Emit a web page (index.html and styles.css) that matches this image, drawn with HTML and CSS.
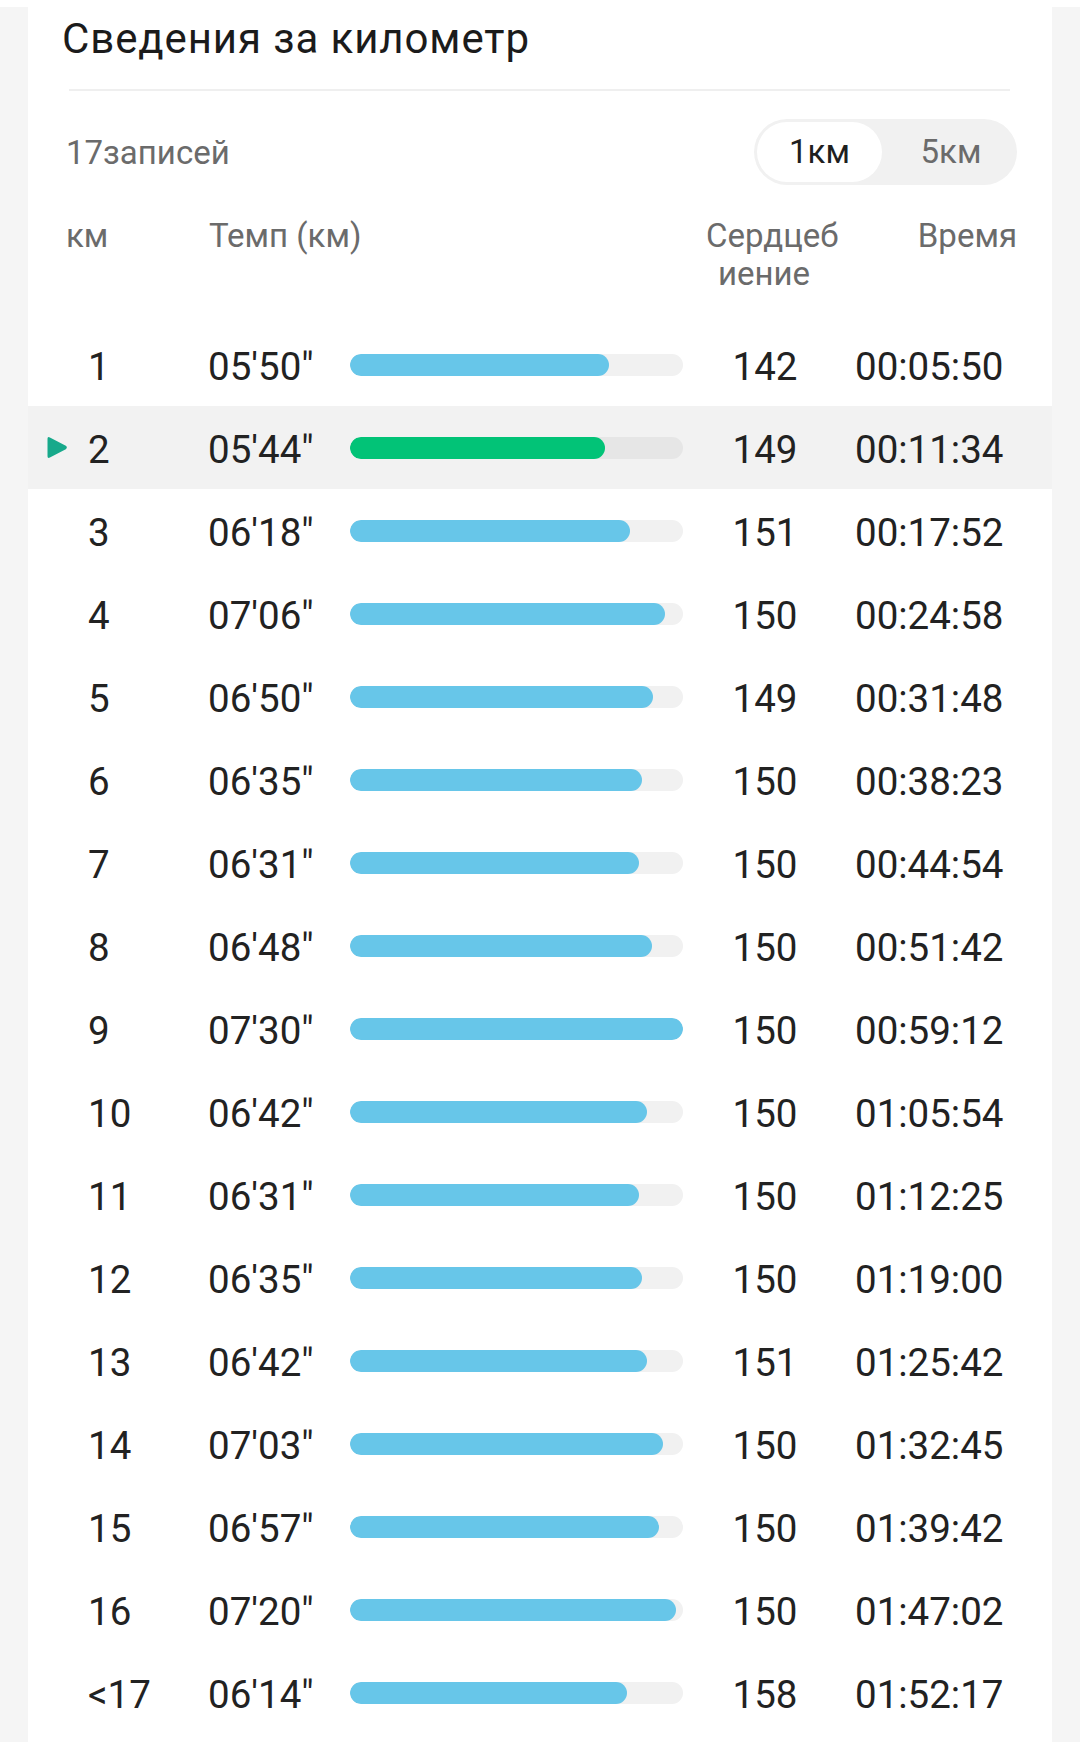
FILE: index.html
```html
<!DOCTYPE html>
<html lang="ru">
<head>
<meta charset="utf-8">
<title>Сведения за километр</title>
<link rel="stylesheet" href="styles.css">
</head>
<body>
<div class="top-strip"></div>
<section class="card">
  <h1 class="title">Сведения за километр</h1>
  <div class="divider"></div>
  <div class="summary">
    <span class="count">17записей</span>
    <div class="toggle">
      <span class="opt active">1км</span>
      <span class="opt">5км</span>
    </div>
  </div>
  <div class="head">
    <span class="h-km">км</span>
    <span class="h-pace">Темп (км)</span>
    <span class="h-hr">Сердцеб<br>иение</span>
    <span class="h-time">Время</span>
  </div>
  <div class="rows">
    <div class="row"><span class="mark"></span><span class="km">1</span><span class="pace">05'50"</span><span class="bar"><span class="fill" style="width:77.78%"></span></span><span class="hr">142</span><span class="time">00:05:50</span></div>
    <div class="row current"><span class="mark"><svg viewBox="0 0 22 24" width="22" height="25"><path d="M1.5 3.2 Q1.5 0.6 3.9 1.9 L19.8 10.3 Q21.9 12 19.8 13.7 L3.9 22.1 Q1.5 23.4 1.5 20.8 Z" fill="#17a98b"/></svg></span><span class="km">2</span><span class="pace">05'44"</span><span class="bar"><span class="fill" style="width:76.44%"></span></span><span class="hr">149</span><span class="time">00:11:34</span></div>
    <div class="row"><span class="mark"></span><span class="km">3</span><span class="pace">06'18"</span><span class="bar"><span class="fill" style="width:84%"></span></span><span class="hr">151</span><span class="time">00:17:52</span></div>
    <div class="row"><span class="mark"></span><span class="km">4</span><span class="pace">07'06"</span><span class="bar"><span class="fill" style="width:94.67%"></span></span><span class="hr">150</span><span class="time">00:24:58</span></div>
    <div class="row"><span class="mark"></span><span class="km">5</span><span class="pace">06'50"</span><span class="bar"><span class="fill" style="width:91.11%"></span></span><span class="hr">149</span><span class="time">00:31:48</span></div>
    <div class="row"><span class="mark"></span><span class="km">6</span><span class="pace">06'35"</span><span class="bar"><span class="fill" style="width:87.78%"></span></span><span class="hr">150</span><span class="time">00:38:23</span></div>
    <div class="row"><span class="mark"></span><span class="km">7</span><span class="pace">06'31"</span><span class="bar"><span class="fill" style="width:86.89%"></span></span><span class="hr">150</span><span class="time">00:44:54</span></div>
    <div class="row"><span class="mark"></span><span class="km">8</span><span class="pace">06'48"</span><span class="bar"><span class="fill" style="width:90.67%"></span></span><span class="hr">150</span><span class="time">00:51:42</span></div>
    <div class="row"><span class="mark"></span><span class="km">9</span><span class="pace">07'30"</span><span class="bar"><span class="fill" style="width:100%"></span></span><span class="hr">150</span><span class="time">00:59:12</span></div>
    <div class="row"><span class="mark"></span><span class="km">10</span><span class="pace">06'42"</span><span class="bar"><span class="fill" style="width:89.33%"></span></span><span class="hr">150</span><span class="time">01:05:54</span></div>
    <div class="row"><span class="mark"></span><span class="km">11</span><span class="pace">06'31"</span><span class="bar"><span class="fill" style="width:86.89%"></span></span><span class="hr">150</span><span class="time">01:12:25</span></div>
    <div class="row"><span class="mark"></span><span class="km">12</span><span class="pace">06'35"</span><span class="bar"><span class="fill" style="width:87.78%"></span></span><span class="hr">150</span><span class="time">01:19:00</span></div>
    <div class="row"><span class="mark"></span><span class="km">13</span><span class="pace">06'42"</span><span class="bar"><span class="fill" style="width:89.33%"></span></span><span class="hr">151</span><span class="time">01:25:42</span></div>
    <div class="row"><span class="mark"></span><span class="km">14</span><span class="pace">07'03"</span><span class="bar"><span class="fill" style="width:94%"></span></span><span class="hr">150</span><span class="time">01:32:45</span></div>
    <div class="row"><span class="mark"></span><span class="km">15</span><span class="pace">06'57"</span><span class="bar"><span class="fill" style="width:92.67%"></span></span><span class="hr">150</span><span class="time">01:39:42</span></div>
    <div class="row"><span class="mark"></span><span class="km">16</span><span class="pace">07'20"</span><span class="bar"><span class="fill" style="width:97.78%"></span></span><span class="hr">150</span><span class="time">01:47:02</span></div>
    <div class="row"><span class="mark"></span><span class="km">&lt;17</span><span class="pace">06'14"</span><span class="bar"><span class="fill" style="width:83.11%"></span></span><span class="hr">158</span><span class="time">01:52:17</span></div>
  </div>
</section>
</body>
</html>
```

FILE: styles.css
```css
* { box-sizing: border-box; }
html, body {
  margin: 0;
  padding: 0;
}
body {
  background: #f5f5f5;
  font-family: Roboto, "Noto Sans", "Liberation Sans", sans-serif;
  color: #222;
}
.top-strip {
  height: 7px;
  background: #fff;
}
.card {
  margin: 0 28px;
  background: #fff;
  padding-bottom: 40px;
}
.title {
  margin: 0;
  padding: 6px 0 0 34px;
  font-size: 42px;
  line-height: 52px;
  letter-spacing: 0.9px;
  font-weight: 400;
  color: #1b1b1b;
}
.divider {
  margin: 24px 42px 0 41px;
  height: 2px;
  background: #efefef;
}
.summary {
  margin-top: 27px;
  display: flex;
  align-items: center;
  justify-content: space-between;
  padding: 2px 35px 0 38px;
  height: 66px;
}
.count {
  font-size: 33px;
  color: #6b6b6b;
}
.toggle {
  display: flex;
  align-items: center;
  width: 263px;
  height: 66px;
  padding: 3px;
  border-radius: 33px;
  background: #f1f1f1;
}
.opt {
  flex: 1;
  text-align: center;
  font-size: 33px;
  line-height: 60px;
  color: #6b6b6b;
  padding-left: 6px;
}
.opt.active {
  flex: 0 0 125px;
  background: #fff;
  border-radius: 30px;
  color: #1f1f1f;
  padding-left: 0;
}
.head {
  margin-top: 33px;
  display: grid;
  grid-template-columns: 143px 497px 116px 1fr;
  padding: 0 35px 0 38px;
  font-size: 33px;
  line-height: 38px;
  color: #6b6b6b;
}
.h-hr { text-align: center; white-space: nowrap; }
.h-time { text-align: right; }
.rows {
  margin-top: 30px;
}
.row {
  display: grid;
  grid-template-columns: 60px 120px 142px 333px 164px 1fr;
  align-items: center;
  height: 83px;
  font-size: 38.5px;
  color: #222;
}
.row.current {
  background: #f2f2f2;
}
.km, .pace, .hr, .time {
  padding-top: 4px;
}
.mark {
  display: flex;
  justify-content: flex-start;
  padding-left: 18px;
  align-items: center;
}
.mark svg { display: block; }
.bar {
  display: block;
  height: 22px;
  border-radius: 11px;
  background: #f1f1f1;
  overflow: hidden;
}
.row.current .bar { background: #e6e6e6; }
.fill {
  display: block;
  height: 100%;
  border-radius: 11px;
  background: #67c6e9;
}
.row.current .fill { background: #02c377; }
.hr { text-align: center; }
.time { padding-left: 8px; }
```
